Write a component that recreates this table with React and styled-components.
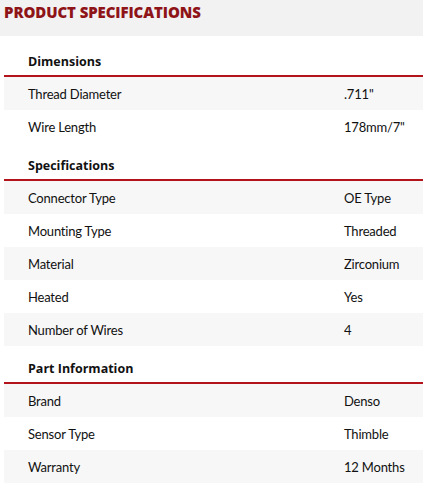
import styled, { createGlobalStyle } from "styled-components";

const GlobalStyle = createGlobalStyle`
  body {
    margin: 0;
    background: #fff;
    font-family: "Open Sans", "Liberation Sans", sans-serif;
    color: #111;
  }
`;

const Page = styled.div`
  width: 423px;
  height: 500px;
  overflow: hidden;
`;

const Banner = styled.div`
  height: 36px;
  background: #f2f2f2;
  padding: 2px 0 0 4px;
  box-sizing: border-box;
`;

const Title = styled.h1`
  margin: 0;
  font-size: 15px;
  font-weight: 800;
  color: #8e1418;
  letter-spacing: -0.1px;
  line-height: 20px;
`;

const Table = styled.div`
  margin: 3px 0 0 4px;
`;

const SectionHead = styled.div`
  height: 38px;
  display: flex;
  align-items: center;
  padding: 9px 0 0 24px;
  box-sizing: border-box;
  font-size: 12.5px;
  font-weight: 700;
  border-bottom: 2px solid #b3141b;
`;

const Row = styled.div`
  height: 33px;
  display: flex;
  align-items: center;
  font-family: Lato, "Open Sans", sans-serif;
  font-size: 13px;
  letter-spacing: -0.2px;
  background: ${(p) => (p.shade ? "#f7f7f7" : "#fff")};
`;

const Label = styled.div`
  width: 340px;
  padding-left: 24px;
  box-sizing: border-box;
`;

const Value = styled.div`
  flex: 1;
`;

const sections = [
  {
    title: "Dimensions",
    rows: [
      ["Thread Diameter", ".711\""],
      ["Wire Length", "178mm/7\""],
    ],
  },
  {
    title: "Specifications",
    rows: [
      ["Connector Type", "OE Type"],
      ["Mounting Type", "Threaded"],
      ["Material", "Zirconium"],
      ["Heated", "Yes"],
      ["Number of Wires", "4"],
    ],
  },
  {
    title: "Part Information",
    rows: [
      ["Brand", "Denso"],
      ["Sensor Type", "Thimble"],
      ["Warranty", "12 Months"],
    ],
  },
];

export default function App() {
  return (
    <Page>
      <GlobalStyle />
      <Banner>
        <Title>PRODUCT SPECIFICATIONS</Title>
      </Banner>
      <Table>
        {sections.map((s) => (
          <div key={s.title}>
            <SectionHead>{s.title}</SectionHead>
            {s.rows.map(([k, v], i) => (
              <Row key={k} shade={i % 2 === 0}>
                <Label>{k}</Label>
                <Value>{v}</Value>
              </Row>
            ))}
          </div>
        ))}
      </Table>
    </Page>
  );
}
